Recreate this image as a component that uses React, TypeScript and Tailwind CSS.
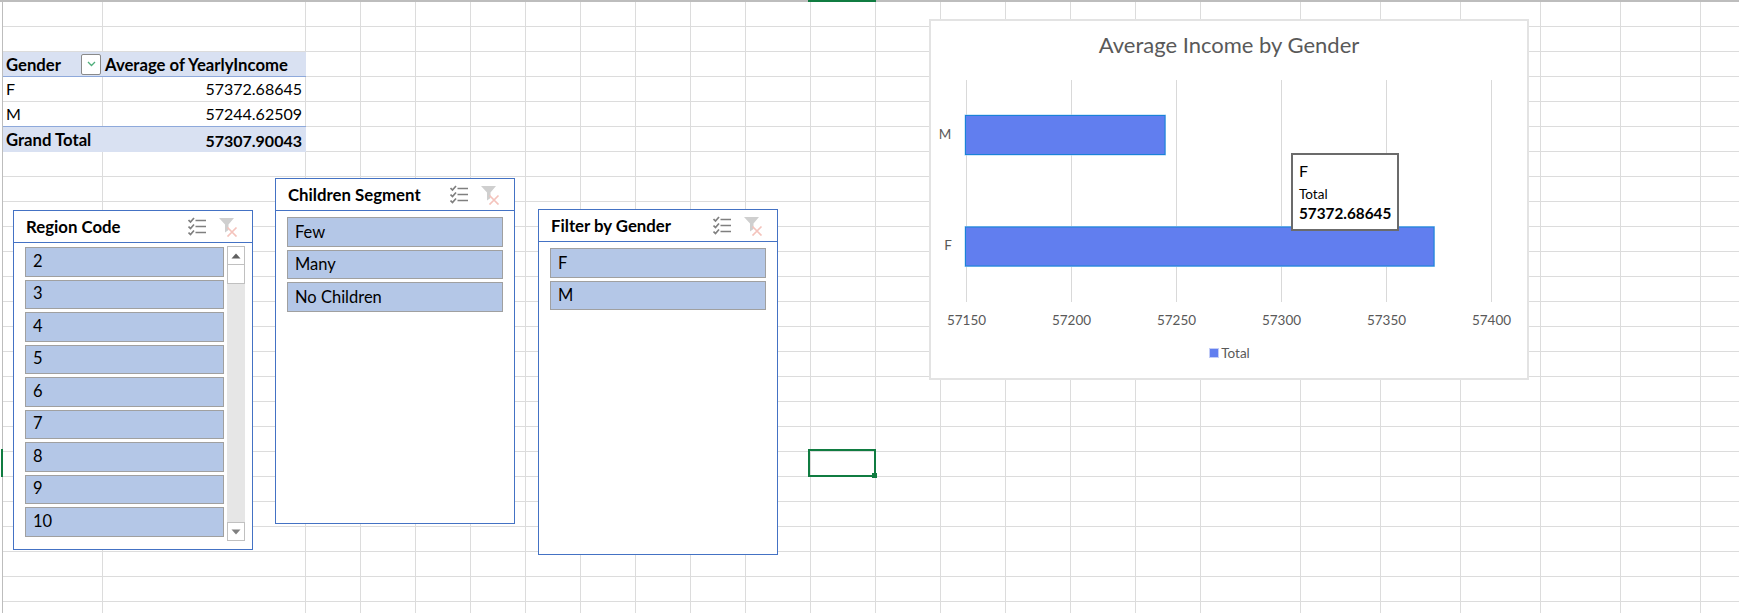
const COLS = 24;
const ROWS = 25;

const regionItems = ["2", "3", "4", "5", "6", "7", "8", "9", "10", ""];
const ticks = [57150, 57200, 57250, 57300, 57350, 57400];

function tickX(value: number) {
  return 35.5 + ((value - 57150) / 50) * 105;
}

// plain sheet row, columns A and B can be overridden for the pivot table
function SheetRow({ index }: { index: number }) {
  const isHeader = index === 2;
  const isTotal = index === 5;
  const isBody = index === 3 || index === 4;

  return (
    <>
      {Array.from({ length: COLS }).map((_, col) => {
        if (col < 2 && (isHeader || isTotal)) {
          return (
            <div
              key={col}
              className={`flex items-center bg-[#d9e1f2] text-[16.7px] ${isHeader ? "border-b border-b-[#8ea9db] pt-[3px]" : "border-t border-t-[#8ea9db] -mt-px pt-[2px]"}`}
            >
              {isHeader && col === 0 && (
                <div className="flex w-full items-center justify-between pr-[2px] pl-[3px] font-bold">
                  <span>Gender</span>
                  <span className="-mt-[3px] flex h-[21px] w-[20px] items-center justify-center rounded-[2px] border border-[#8a8a8a] bg-white">
                    <svg width="9" height="6" viewBox="0 0 9 6" fill="none" stroke="#4fae7b" strokeWidth="1.3">
                      <path d="M1 1l3.5 3.5L8 1" />
                    </svg>
                  </span>
                </div>
              )}
              {isHeader && col === 1 && <span className="pl-[2px] font-bold">Average of YearlyIncome</span>}
              {isTotal && col === 0 && <span className="whitespace-nowrap pl-[3px] font-bold">Grand Total</span>}
              {isTotal && col === 1 && <span className="w-full pr-[4px] text-right text-[16px] font-bold">57307.90043</span>}
            </div>
          );
        }
        return (
          <div key={col} className="flex items-center border-r border-b border-[#dcdcdc]">
            {isBody && col === 0 && <span className="pl-[3px]">{index === 3 ? "F" : "M"}</span>}
            {isBody && col === 1 && (
              <span className="w-full pr-[3px] text-right">{index === 3 ? "57372.68645" : "57244.62509"}</span>
            )}
          </div>
        );
      })}
    </>
  );
}

function SlicerIcons() {
  return (
    <div className="flex items-center gap-[13px]">
      <svg width="18" height="19" viewBox="0 0 18 19" fill="none">
        <g stroke="#7f7f7f" strokeWidth="1.7">
          <path d="M0.5 3l2 2 3.5-4M0.5 9.5l2 2 3.5-4M0.5 15.5l2 2 3.5-4" />
          <path d="M7.5 3.5H18M7.5 9.5H18M7.5 15.5H18" />
        </g>
      </svg>
      <svg width="19" height="20" viewBox="0 0 19 20" fill="none">
        <path d="M0 1h15l-5.5 6.5V13L6 15.5V7.5z" fill="#cfcfcf" />
        <path d="M8.5 10.5l9 9M17.5 10.5l-9 9" stroke="#f4c3bc" strokeWidth="1.7" />
      </svg>
    </div>
  );
}

function SlicerItem({ label, raised }: { label: string; raised?: boolean }) {
  return (
    <div className={`flex h-[29.5px] shrink-0 items-center border-[1.5px] border-[#a0a0a0] bg-[#b4c7e7] pl-[7px] text-[16.5px] ${raised ? "pb-[1px]" : "pt-[1px]"}`}>
      {label}
    </div>
  );
}

function SlicerHeader({ title }: { title: string }) {
  return (
    <div className="flex h-[32px] shrink-0 items-center justify-between border-b border-[#4472c4] pr-[14px] pl-[12px]">
      <span className="text-[16.8px] font-bold">{title}</span>
      <SlicerIcons />
    </div>
  );
}

function Slicer({ title, items, className }: { title: string; items: string[]; className: string }) {
  return (
    <div className={`absolute flex flex-col border border-[#4472c4] bg-white ${className}`}>
      <SlicerHeader title={title} />
      <div className="flex flex-col gap-[3px] px-[11px] pt-[6px]">
        {items.map((item) => (
          <SlicerItem key={item} label={item} />
        ))}
      </div>
    </div>
  );
}

function RegionSlicer() {
  return (
    <div className="absolute top-[210px] left-[13px] flex h-[340px] w-[240px] flex-col border border-[#4472c4] bg-white">
      <SlicerHeader title="Region Code" />
      <div className="flex h-[298px] gap-[3px] pt-[3px] pl-[11px]">
        <div className="flex h-[294px] w-[199px] flex-col gap-[3px] overflow-hidden pt-[1px]">
          {regionItems.map((item, i) => (
            <SlicerItem key={i} label={item} raised />
          ))}
        </div>
        <div className="flex h-[295px] w-[18px] flex-col bg-[#e6e6e6]">
          <div className="flex h-[19px] items-center justify-center border border-[#c0c0c0] bg-white">
            <svg width="10" height="6" viewBox="0 0 10 6">
              <path d="M0.5 5.5L5 0.5l4.5 5z" fill="#606060" />
            </svg>
          </div>
          <div className="h-[19px] border border-t-0 border-[#c0c0c0] bg-white" />
          <div className="flex-1" />
          <div className="flex h-[19px] items-center justify-center border border-[#c0c0c0] bg-white">
            <svg width="10" height="6" viewBox="0 0 10 6">
              <path d="M0.5 0.5h9L5 5.5z" fill="#808080" />
            </svg>
          </div>
        </div>
      </div>
    </div>
  );
}

function Bar({ y, width }: { y: number; width: number }) {
  return (
    <>
      <rect x="34" y={y - 0.5} width={width + 1} height="40" fill="none" stroke="#a9d3f3" />
      <rect x="34.5" y={y} width={width} height="39" fill="#617eef" stroke="#1b82d8" />
    </>
  );
}

function IncomeChart() {
  return (
    <div className="absolute top-[19px] left-[929px] flex h-[361px] w-[600px] flex-col items-center border-2 border-[#e3e3e3] bg-white font-['Lato',sans-serif] text-[#595959]">
      <div className="mt-[9px] h-[31px] text-[22px] leading-[30px]">Average Income by Gender</div>
      <svg width="596" height="268" viewBox="0 0 596 268" className="mt-[17px] shrink-0">
        {ticks.map((t) => (
          <line key={t} x1={tickX(t)} x2={tickX(t)} y1="2" y2="224" stroke="#d9d9d9" strokeWidth="1" />
        ))}
        <Bar y={37.5} width={199.5} />
        <Bar y={149} width={468.5} />
        <text x="14" y="60.5" fontSize="13.5" fill="#595959" textAnchor="middle">M</text>
        <text x="17" y="172" fontSize="13.5" fill="#595959" textAnchor="middle">F</text>
        {ticks.map((t) => (
          <text key={t} x={tickX(t)} y="247" fontSize="13.5" fill="#595959" textAnchor="middle">
            {t}
          </text>
        ))}
      </svg>
      <div className="mt-[-1px] flex items-center gap-[2px] pl-[1px] text-[13.5px] leading-[16px]">
        <span className="h-[10px] w-[10px] border border-[#c3cdf7] bg-[#617eef]" />
        <span>Total</span>
      </div>
      <div className="absolute top-[132px] left-[360px] flex h-[78px] w-[108px] flex-col border-2 border-[#6b6b6b] bg-white pt-[5px] pl-[6px] text-black">
        <span className="text-[16px] leading-[21px]">F</span>
        <span className="mt-[3px] text-[13.5px] leading-[20px]">Total</span>
        <span className="text-[15.3px] leading-[19px] font-bold">57372.68645</span>
      </div>
    </div>
  );
}

export default function App() {
  return (
    <div className="relative h-[613px] w-[1739px] overflow-hidden bg-white font-['Lato',sans-serif] text-[16px] text-black">
      <div className="h-full border-t-2 border-[#bdbdbd] pl-[2px]">
        <div className="grid grid-cols-[100px_203px_repeat(8,55px)_repeat(7,65px)_100px_repeat(6,80px)] auto-rows-[25px] border-l border-[#bdbdbd]">
          {Array.from({ length: ROWS }).map((_, i) => (
            <SheetRow key={i} index={i} />
          ))}
        </div>
      </div>

      {/* header markers for the active cell */}
      <div className="absolute top-0 left-[808px] h-[2px] w-[68px] bg-[#107c41]" />
      <div className="absolute top-[449px] left-[1px] h-[28px] w-[2px] bg-[#107c41]" />

      <Slicer title="Children Segment" items={["Few", "Many", "No Children"]} className="top-[178px] left-[275px] h-[346px] w-[240px]" />
      <Slicer title="Filter by Gender" items={["F", "M"]} className="top-[209px] left-[538px] h-[346px] w-[240px]" />
      <RegionSlicer />
      <IncomeChart />

      {/* active cell */}
      <div className="absolute top-[449px] left-[808px] h-[28px] w-[68px] border-2 border-[#107c41]">
        <div className="absolute -right-[3px] -bottom-[3px] h-[5px] w-[5px] bg-[#107c41]" />
      </div>
    </div>
  );
}
